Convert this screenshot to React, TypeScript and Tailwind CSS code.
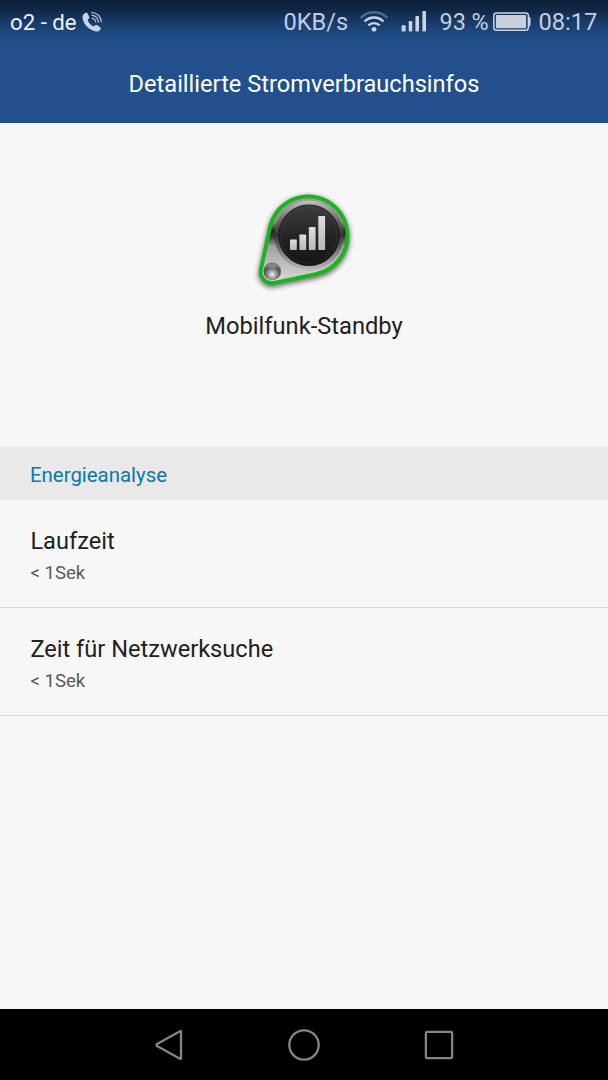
const entries = [
  { title: "Laufzeit", value: "< 1Sek" },
  { title: "Zeit für Netzwerksuche", value: "< 1Sek" },
];

function CallIcon() {
  return (
    <svg className="ml-[6px] h-[22px] w-[22px] shrink-0" viewBox="0 0 22 22" fill="none">
      <path
        d="M3.2 2 C1.2 3 .2 4.8 .5 7 C1.4 13.6 7.5 19.4 14 20.5 C16.4 20.8 18 19.8 18.6 18 C18.9 17 18.5 16.4 17.8 15.9 L14.7 14.1 C13.8 13.7 13.2 14 12.6 14.7 C12 15.5 11.5 15.6 10.7 15.1 C8.5 13.8 7 12 6 9.7 C5.7 8.9 5.8 8.5 6.5 8 C7.3 7.4 7.5 6.8 7.2 5.9 L5.8 2.8 C5.2 1.7 4.3 1.5 3.2 2 Z"
        fill="#c9d3e5"
      />
      <path
        d="M9.7 7.2 C12 7.5 13.4 8.9 13.8 11.4 M9.5 4.2 C13.5 4.6 16 7 16.6 11.3 M9.3 1.3 C15 1.7 18.7 5.3 19.4 11.2"
        stroke="#aebdd6"
        strokeWidth="1.2"
      />
    </svg>
  );
}

function WifiIcon() {
  return (
    <svg className="h-[24px] w-[30px] shrink-0" viewBox="0 0 30 24" fill="none" strokeWidth="2.4">
      <path d="M1.6 8 C9 .4 21 .4 28.4 8" stroke="#4d6b98" />
      <path d="M5.5 11.5 C11 6.2 19 6.2 24.5 11.5" stroke="#cbd5e3" />
      <path d="M9.4 15.4 C12.6 12.4 17.4 12.4 20.6 15.4" stroke="#cbd5e3" />
      <circle cx="15" cy="19.3" r="2.4" fill="#cbd5e3" />
    </svg>
  );
}

function SignalIcon() {
  return (
    <svg className="h-[22px] w-[26px] shrink-0" viewBox="0 0 26 22" fill="#cbd5e3">
      <rect x="0.6" y="14.2" width="4" height="6.3" rx="1" />
      <rect x="7.7" y="10" width="3.6" height="10.5" rx="1" />
      <rect x="14.4" y="5" width="3.6" height="15.5" rx="1" />
      <rect x="21.4" y="0" width="3.6" height="20.5" rx="1" />
    </svg>
  );
}

function BatteryIcon() {
  return (
    <svg className="h-[20px] w-[38px] shrink-0" viewBox="0 0 38 20" fill="none">
      <rect x="0.8" y="0.9" width="34.6" height="17.4" rx="2.8" stroke="#cbd5e3" strokeWidth="1.5" />
      <rect x="2.9" y="3" width="30.2" height="13.2" rx="0.8" fill="#c9cfdd" />
      <path d="M36 5 H36.6 Q37.5 5 37.5 6.1 V13 Q37.5 14.1 36.6 14.1 H36 Z" fill="#cbd5e3" />
    </svg>
  );
}

function StandbyIcon() {
  return (
    <svg className="h-[120px] w-[120px]" viewBox="0 0 120 120">
      <defs>
        <linearGradient id="metal" x1="0" y1="0" x2="0" y2="1">
          <stop offset="0" stopColor="#a2a2a2" />
          <stop offset="0.3" stopColor="#8b8b8b" />
          <stop offset="0.4" stopColor="#242424" />
          <stop offset="0.46" stopColor="#353535" />
          <stop offset="0.58" stopColor="#a2a2a2" />
          <stop offset="1" stopColor="#dadada" />
        </linearGradient>
        <linearGradient id="ring" x1="0" y1="0" x2="0" y2="1">
          <stop offset="0" stopColor="#c2c2c2" />
          <stop offset="0.28" stopColor="#6a6a6a" />
          <stop offset="0.5" stopColor="#333333" />
          <stop offset="0.75" stopColor="#808080" />
          <stop offset="1" stopColor="#b8b8b8" />
        </linearGradient>
        <linearGradient id="disc" x1="0" y1="0" x2="0" y2="1">
          <stop offset="0" stopColor="#3c3c3c" />
          <stop offset="0.55" stopColor="#232323" />
          <stop offset="1" stopColor="#151515" />
        </linearGradient>
        <linearGradient id="bars" x1="0" y1="0" x2="0" y2="1">
          <stop offset="0" stopColor="#dedede" />
          <stop offset="1" stopColor="#b8b8b8" />
        </linearGradient>
        <radialGradient id="knob" cx="0.5" cy="0.68" r="0.6">
          <stop offset="0" stopColor="#f0f0f0" />
          <stop offset="0.35" stopColor="#a2a2a2" />
          <stop offset="0.75" stopColor="#505050" />
          <stop offset="1" stopColor="#777777" />
        </radialGradient>
        <filter id="shadow" x="-20%" y="-20%" width="140%" height="140%">
          <feGaussianBlur stdDeviation="2.5" />
        </filter>
      </defs>
      <path
        d="M26.3 46 A39.2 39.2 0 1 1 72 94 L30 102.8 A11.3 11.3 0 0 1 17 89 Z"
        transform="translate(0 2)"
        fill="#333"
        stroke="#333"
        strokeWidth="5"
        opacity="0.7"
        filter="url(#shadow)"
      />
      <path
        d="M26.3 46 A39.2 39.2 0 1 1 72 94 L30 102.8 A11.3 11.3 0 0 1 17 89 Z"
        fill="url(#metal)"
        stroke="#16b716"
        strokeWidth="3.8"
      />
      <circle cx="65" cy="55.3" r="34.7" fill="url(#ring)" />
      <circle cx="65" cy="55.3" r="30.4" fill="url(#disc)" stroke="#151515" strokeWidth="0.8" />
      <circle cx="65" cy="55.3" r="28" fill="none" stroke="#484848" strokeWidth="0.6" opacity="0.6" />
      <g fill="url(#bars)">
        <rect x="46" y="59.5" width="6.8" height="10.5" rx="0.8" />
        <rect x="55.4" y="54.5" width="6.8" height="15.5" rx="0.8" />
        <rect x="64.8" y="47" width="6.8" height="23" rx="0.8" />
        <rect x="74.3" y="36" width="6.8" height="34" rx="0.8" />
      </g>
      <circle cx="28.2" cy="91.3" r="8.8" fill="url(#knob)" />
      <ellipse cx="28.2" cy="86.2" rx="5" ry="2" fill="#aaa" opacity="0.5" />
    </svg>
  );
}

export default function App() {
  return (
    <div className="flex h-[1080px] w-[608px] flex-col overflow-hidden bg-[#f7f7f7] font-['Roboto',sans-serif] text-[#212121]">

      <header className="h-[123px] shrink-0 bg-[#21508d] bg-[linear-gradient(to_bottom,#0d1f38_0px,#0f2543_8px,#183b69_22px,#1f4b84_36px,#21508d_48px)] text-white">
        <div className="flex h-[44px] items-center text-[23.6px] text-[#c3cedf]">
          <span className="ml-[10px] w-[66px] whitespace-nowrap pt-px text-[22.2px] text-[#eef2f8]">o2 - de</span>
          <CallIcon />
          <span className="ml-auto w-[75px] whitespace-nowrap pt-px">0KB/s</span>
          <WifiIcon />
          <div className="ml-[12px] flex">
            <SignalIcon />
          </div>
          <span className="ml-[13px] w-[53px] whitespace-nowrap pt-px text-[23.4px]">93 %</span>
          <BatteryIcon />
          <span className="ml-[8px] w-[69.5px] whitespace-nowrap pt-px">08:17</span>
        </div>

        <h1 className="flex h-[79px] items-start justify-center pt-[24px] text-[23.6px] leading-[32px]">
          Detaillierte Stromverbrauchsinfos
        </h1>
      </header>

      <section className="flex h-[324px] shrink-0 flex-col items-center pt-[57px]">
        <StandbyIcon />
        <h2 className="mt-[10px] text-[23.7px] leading-[32px]">Mobilfunk-Standby</h2>
      </section>

      <h3 className="flex h-[53px] shrink-0 items-center bg-[#e9e9e9] px-[30px] pt-[3px] text-[20.4px] text-[#0b78a8]">
        Energieanalyse
      </h3>

      <ul className="flex-1">
        {entries.map((entry) => (
          <li key={entry.title} className="h-[108px] border-b border-[#d9d9d9] px-[30.4px] pt-[25px]">
            <p className="text-[23.6px] leading-[32px]">{entry.title}</p>
            <p className="mt-[4px] text-[18.6px] leading-[24px] text-[#5a5a5a]">{entry.value}</p>
          </li>
        ))}
      </ul>

      <nav className="flex h-[71px] shrink-0 items-center justify-center gap-[103px] bg-black">
        <svg className="h-[32px] w-[32px]" viewBox="-2 0 32 32" fill="none" stroke="#858585" strokeWidth="2.3" strokeLinejoin="round">
          <path d="M26 2.6 V29.4 Q26 30.4 25 29.8 L2 17 Q.8 16 2 15 L25 2.2 Q26 1.6 26 2.6 Z" />
        </svg>
        <svg className="h-[32px] w-[32px]" viewBox="0 0 32 32" fill="none" stroke="#858585" strokeWidth="2.3">
          <circle cx="16" cy="16" r="14.7" />
        </svg>
        <svg className="h-[32px] w-[32px]" viewBox="0 0 32 32" fill="none" stroke="#858585" strokeWidth="2.3">
          <rect x="2.9" y="2.9" width="26.2" height="26.2" rx="1" />
        </svg>
      </nav>

    </div>
  );
}
